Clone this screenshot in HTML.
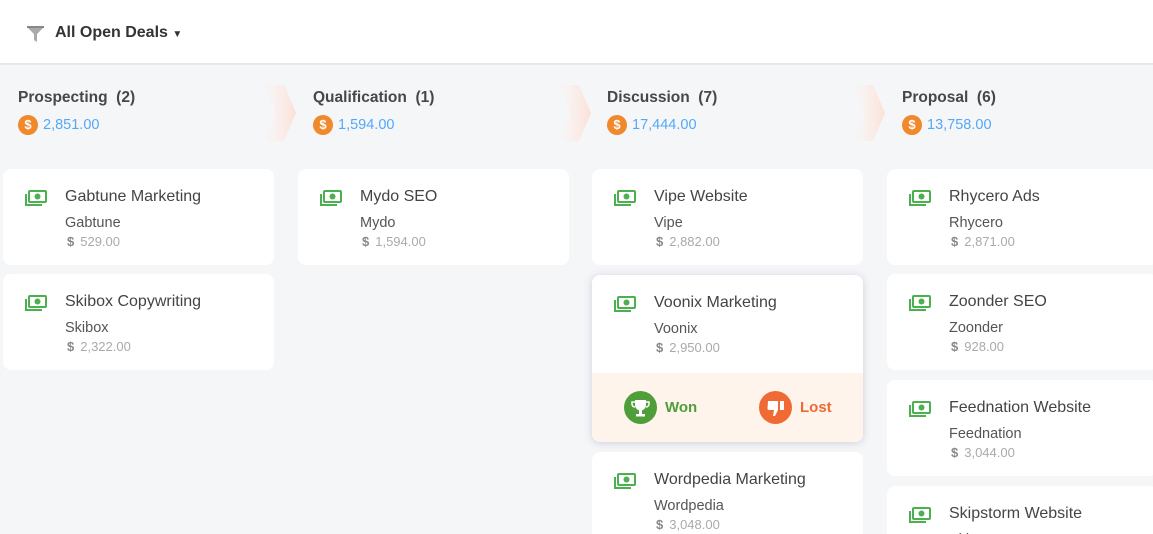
<!DOCTYPE html>
<html><head><meta charset="utf-8"><style>
*{margin:0;padding:0;box-sizing:border-box}
html,body{width:1153px;height:534px;overflow:hidden}
body{background:#f5f6f8;font-family:"Liberation Sans",sans-serif;position:relative}
.hdr{position:absolute;left:0;top:0;width:1153px;height:65px;background:#fff;border-bottom:2px solid #e6e7ea}
.hdr .t{position:absolute;left:55px;top:24px;font-size:16px;font-weight:bold;color:#333}
.ct{position:absolute;top:89px;font-size:15.5px;font-weight:bold;color:#474747;white-space:nowrap}
.amt{position:absolute;top:115px;font-size:14.5px;color:#55a8f5;white-space:nowrap}
.coin{display:inline-block;width:20px;height:20px;border-radius:50%;background:#f0892c;color:#fff;font-size:13px;font-weight:bold;text-align:center;line-height:20px;vertical-align:middle;margin-right:5px}
.arrow{position:absolute;top:85px;width:32px;height:56px}
.card{position:absolute;width:271px;background:#fff;border-radius:8px;height:96px}
.card .ic{position:absolute;left:22px;top:21px}
.card .n{position:absolute;left:62px;top:19px;font-size:16px;color:#444}
.card .c{position:absolute;left:62px;top:46px;font-size:14.5px;color:#555}
.card .v{position:absolute;left:64px;top:65px;font-size:13px;color:#aaa}
.card .v b{color:#888;font-size:13px;margin-right:6px}
.exp{height:167px;box-shadow:0 1px 8px rgba(120,120,160,.3);overflow:hidden}
.foot{position:absolute;left:0;top:98px;width:100%;height:69px;background:#fef4ec}
.btn{position:absolute;top:18px;font-size:15px;font-weight:bold;line-height:33px;display:flex;align-items:center}
.btn svg{margin-right:8px}
</style></head><body>
<div class="hdr">
<svg style="position:absolute;left:26px;top:25px" width="19" height="18" viewBox="0 0 19 18"><path d="M1 2 H18 L11 9 V17 L8 15 V9 Z" fill="#aaa"/><path d="M1 2 H18" stroke="#888" stroke-width="2"/></svg>
<div class="t">All Open Deals <span style="font-size:10px">▼</span></div>
</div>

<svg width="0" height="0" style="position:absolute"><defs>
<linearGradient id="g" x1="0" x2="1"><stop offset="0" stop-color="#fdf2ee" stop-opacity="0.2"/><stop offset="1" stop-color="#fbe0d6"/></linearGradient>
<symbol id="m" viewBox="0 0 22 16"><rect x="4" y="1" width="17" height="11" rx="1" fill="none" stroke="#4caf50" stroke-width="2"/><circle cx="12.5" cy="6.5" r="3" fill="#4caf50"/><path d="M1 4 V15 H17" fill="none" stroke="#4caf50" stroke-width="2"/></symbol>
</defs></svg>

<svg class="arrow" style="left:264px"><path d="M0 0 H20 L32 28 L20 56 H0 L12 28 Z" fill="url(#g)"/></svg>
<svg class="arrow" style="left:559px"><path d="M0 0 H20 L32 28 L20 56 H0 L12 28 Z" fill="url(#g)"/></svg>
<svg class="arrow" style="left:853px"><path d="M0 0 H20 L32 28 L20 56 H0 L12 28 Z" fill="url(#g)"/></svg>

<div class="ct" style="left:18px">Prospecting&nbsp; (2)</div>
<div class="amt" style="left:18px"><span class="coin">$</span>2,851.00</div>
<div class="ct" style="left:313px">Qualification&nbsp; (1)</div>
<div class="amt" style="left:313px"><span class="coin">$</span>1,594.00</div>
<div class="ct" style="left:607px">Discussion&nbsp; (7)</div>
<div class="amt" style="left:607px"><span class="coin">$</span>17,444.00</div>
<div class="ct" style="left:902px">Proposal&nbsp; (6)</div>
<div class="amt" style="left:902px"><span class="coin">$</span>13,758.00</div>

<div class="card" style="left:3px;top:169px"><svg class="ic" width="22" height="16"><use href="#m"/></svg><div class="n">Gabtune Marketing</div><div class="c">Gabtune</div><div class="v"><b>$</b>529.00</div></div>
<div class="card" style="left:3px;top:274px"><svg class="ic" width="22" height="16"><use href="#m"/></svg><div class="n">Skibox Copywriting</div><div class="c">Skibox</div><div class="v"><b>$</b>2,322.00</div></div>

<div class="card" style="left:298px;top:169px"><svg class="ic" width="22" height="16"><use href="#m"/></svg><div class="n">Mydo SEO</div><div class="c">Mydo</div><div class="v"><b>$</b>1,594.00</div></div>

<div class="card" style="left:592px;top:169px"><svg class="ic" width="22" height="16"><use href="#m"/></svg><div class="n">Vipe Website</div><div class="c">Vipe</div><div class="v"><b>$</b>2,882.00</div></div>
<div class="card exp" style="left:592px;top:275px"><svg class="ic" width="22" height="16"><use href="#m"/></svg><div class="n">Voonix Marketing</div><div class="c">Voonix</div><div class="v"><b>$</b>2,950.00</div>
<div class="foot">
<div class="btn" style="left:32px;color:#4f9e3a"><svg width="33" height="33" viewBox="0 0 33 33"><circle cx="16.5" cy="16.5" r="16.5" fill="#4f9e3a"/><path d="M11 9 H22 V14 A5.5 5.5 0 0 1 11 14 Z" fill="#fff"/><path d="M11 11 H8 V13 A3 3 0 0 0 11 16 M22 11 H25 V13 A3 3 0 0 1 22 16" fill="none" stroke="#fff" stroke-width="1.5"/><rect x="15" y="19" width="3" height="4" fill="#fff"/><rect x="12" y="23" width="9" height="2.5" fill="#fff"/></svg>Won</div>
<div class="btn" style="left:167px;color:#ef6a34"><svg width="33" height="33" viewBox="0 0 33 33"><circle cx="16.5" cy="16.5" r="16.5" fill="#ef6a34"/><path d="M9 10 H19 V19 L16 25 H14 L15 19 H10 A1.5 1.5 0 0 1 8.5 17.5 Z" fill="#fff"/><rect x="21" y="10" width="4" height="9" fill="#fff"/></svg>Lost</div>
</div></div>
<div class="card" style="left:592px;top:452px"><svg class="ic" width="22" height="16"><use href="#m"/></svg><div class="n">Wordpedia Marketing</div><div class="c">Wordpedia</div><div class="v"><b>$</b>3,048.00</div></div>

<div class="card" style="left:887px;top:169px"><svg class="ic" width="22" height="16"><use href="#m"/></svg><div class="n">Rhycero Ads</div><div class="c">Rhycero</div><div class="v"><b>$</b>2,871.00</div></div>
<div class="card" style="left:887px;top:274px"><svg class="ic" width="22" height="16"><use href="#m"/></svg><div class="n">Zoonder SEO</div><div class="c">Zoonder</div><div class="v"><b>$</b>928.00</div></div>
<div class="card" style="left:887px;top:380px"><svg class="ic" width="22" height="16"><use href="#m"/></svg><div class="n">Feednation Website</div><div class="c">Feednation</div><div class="v"><b>$</b>3,044.00</div></div>
<div class="card" style="left:887px;top:486px"><svg class="ic" width="22" height="16"><use href="#m"/></svg><div class="n">Skipstorm Website</div><div class="c">Skipstorm</div><div class="v"><b>$</b>1,200.00</div></div>
</body></html>
